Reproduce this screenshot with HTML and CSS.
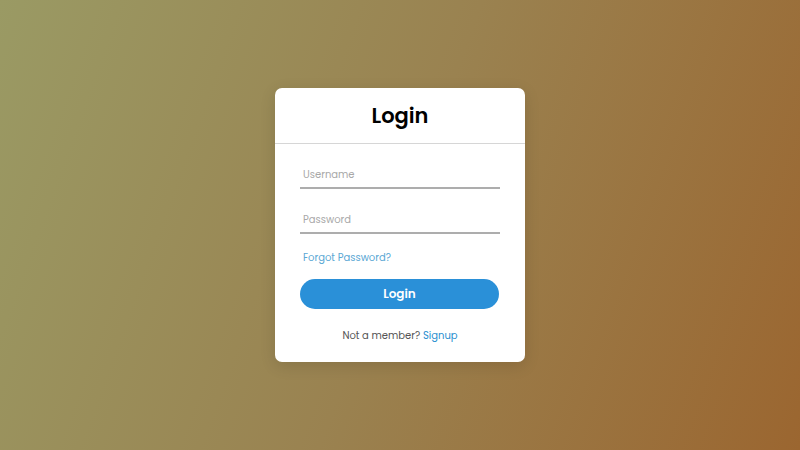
FILE: index.html
```html
<!DOCTYPE html>
<html>
<head>
<meta charset="utf-8">
<link rel="stylesheet" href="styles.css">
</head>
<body>
<div class="card">
  <div class="head"><h1>Login</h1></div>
  <form class="form">
    <div class="field"><input type="text" placeholder="Username"></div>
    <div class="field last"><input type="password" placeholder="Password"></div>
    <a class="forgot" href="#">Forgot Password?</a>
    <button type="button" class="btn">Login</button>
    <p class="signup">Not a member? <a href="#">Signup</a></p>
  </form>
</div>
</body>
</html>
```
FILE: styles.css
```css
* { box-sizing: border-box; }
html, body { margin: 0; height: 100%; }
body {
  font-family: "Poppins", "Open Sans", "Noto Sans", sans-serif;
  background: linear-gradient(110deg, #9a9a64 0%, #9a8250 50%, #9b6630 100%);
  display: flex;
  align-items: flex-start;
  justify-content: center;
  padding-top: 88px;
}
.card {
  width: 250px;
  background: #fff;
  border-radius: 7px;
  box-shadow: 0 4px 16px rgba(0,0,0,0.12);
}
.head {
  height: 56px;
  border-bottom: 1px solid #d6d6d6;
  display: flex;
  align-items: center;
  justify-content: center;
}
h1 {
  margin: 0;
  font-size: 21px;
  font-weight: 600;
  color: #000;
  padding-top: 0;
}
.form {
  padding: 20px 25px 18px;
  display: flex;
  flex-direction: column;
}
.field {
  border-bottom: 2px solid #adadad;
  height: 25px;
  margin-bottom: 20px;
}
.field.last { margin-bottom: 16px; }
.field input {
  display: block;
  border: none;
  outline: none;
  width: 100%;
  height: 21px;
  font-family: inherit;
  font-size: 10px;
  padding: 0 3px;
  color: #333;
  background: transparent;
}
.field input::placeholder { color: #a8a8a8; }
.forgot {
  font-size: 10px;
  color: #5aa7d4;
  text-decoration: none;
  padding-left: 3px;
  line-height: 16px;
}
.btn {
  margin-top: 13px;
  height: 30px;
  width: 199px;
  border: none;
  border-radius: 15px;
  background: #2a90d8;
  color: #fff;
  font-family: inherit;
  font-size: 12px;
  font-weight: 600;
}
.signup {
  margin: 19px 0 0;
  text-align: center;
  font-size: 10px;
  color: #555;
  line-height: 16px;
}
.signup a { color: #2a8fd0; text-decoration: none; }
```
